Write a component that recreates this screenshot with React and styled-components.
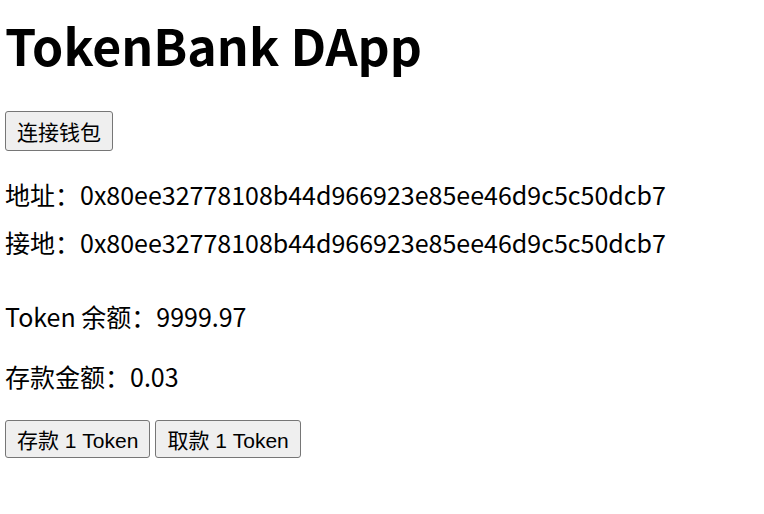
import React from "react";
import styled, {createGlobalStyle} from "styled-components";

const GlobalStyle = createGlobalStyle`
    body {
        margin : 0;
        background : #ffffff;
        color : #000000;
        font-family : "Noto Sans CJK SC", sans-serif;
    }
`;

const Page = styled.div`
    padding : 0 5px;
`;

const Title = styled.h1`
    margin : 11px 0 33px;
    font-size : 50px;
    font-weight : 700;
    line-height : 67px;
`;

const Button = styled.button`
    font-family : "Liberation Sans", "Noto Sans CJK SC", sans-serif;
    font-size : 21px;
    height : ${props => props.big ? "40px" : "38px"};
    padding : 0 11px;
    background : #efefef;
    border : 1px solid #767676;
    border-radius : 3px;
    color : #000;
`;

const InfoLine = styled.p`
    margin : 0;
    font-size : 25px;
    line-height : 48px;
`;

const Section = styled.div`
    margin-top : ${props => props.top}px;
`;

const ButtonRow = styled.div`
    display : flex;
    gap : 5px;
`;

const address = "0x80ee32778108b44d966923e85ee46d9c5c50dcb7";

function App(){
    return(
        <Page>
            <GlobalStyle />
            <Title>TokenBank DApp</Title>
            <Button big>连接钱包</Button>

            <Section top={19}>
                <InfoLine>地址：{address}</InfoLine>
                <InfoLine>接地：{address}</InfoLine>
            </Section>

            <Section top={26}>
                <InfoLine>Token 余额：9999.97</InfoLine>
            </Section>
            <Section top={12}>
                <InfoLine>存款金额：0.03</InfoLine>
            </Section>

            <Section top={20}>
                <ButtonRow>
                    <Button>存款 1 Token</Button>
                    <Button>取款 1 Token</Button>
                </ButtonRow>
            </Section>
        </Page>
    );
}

export default App;
